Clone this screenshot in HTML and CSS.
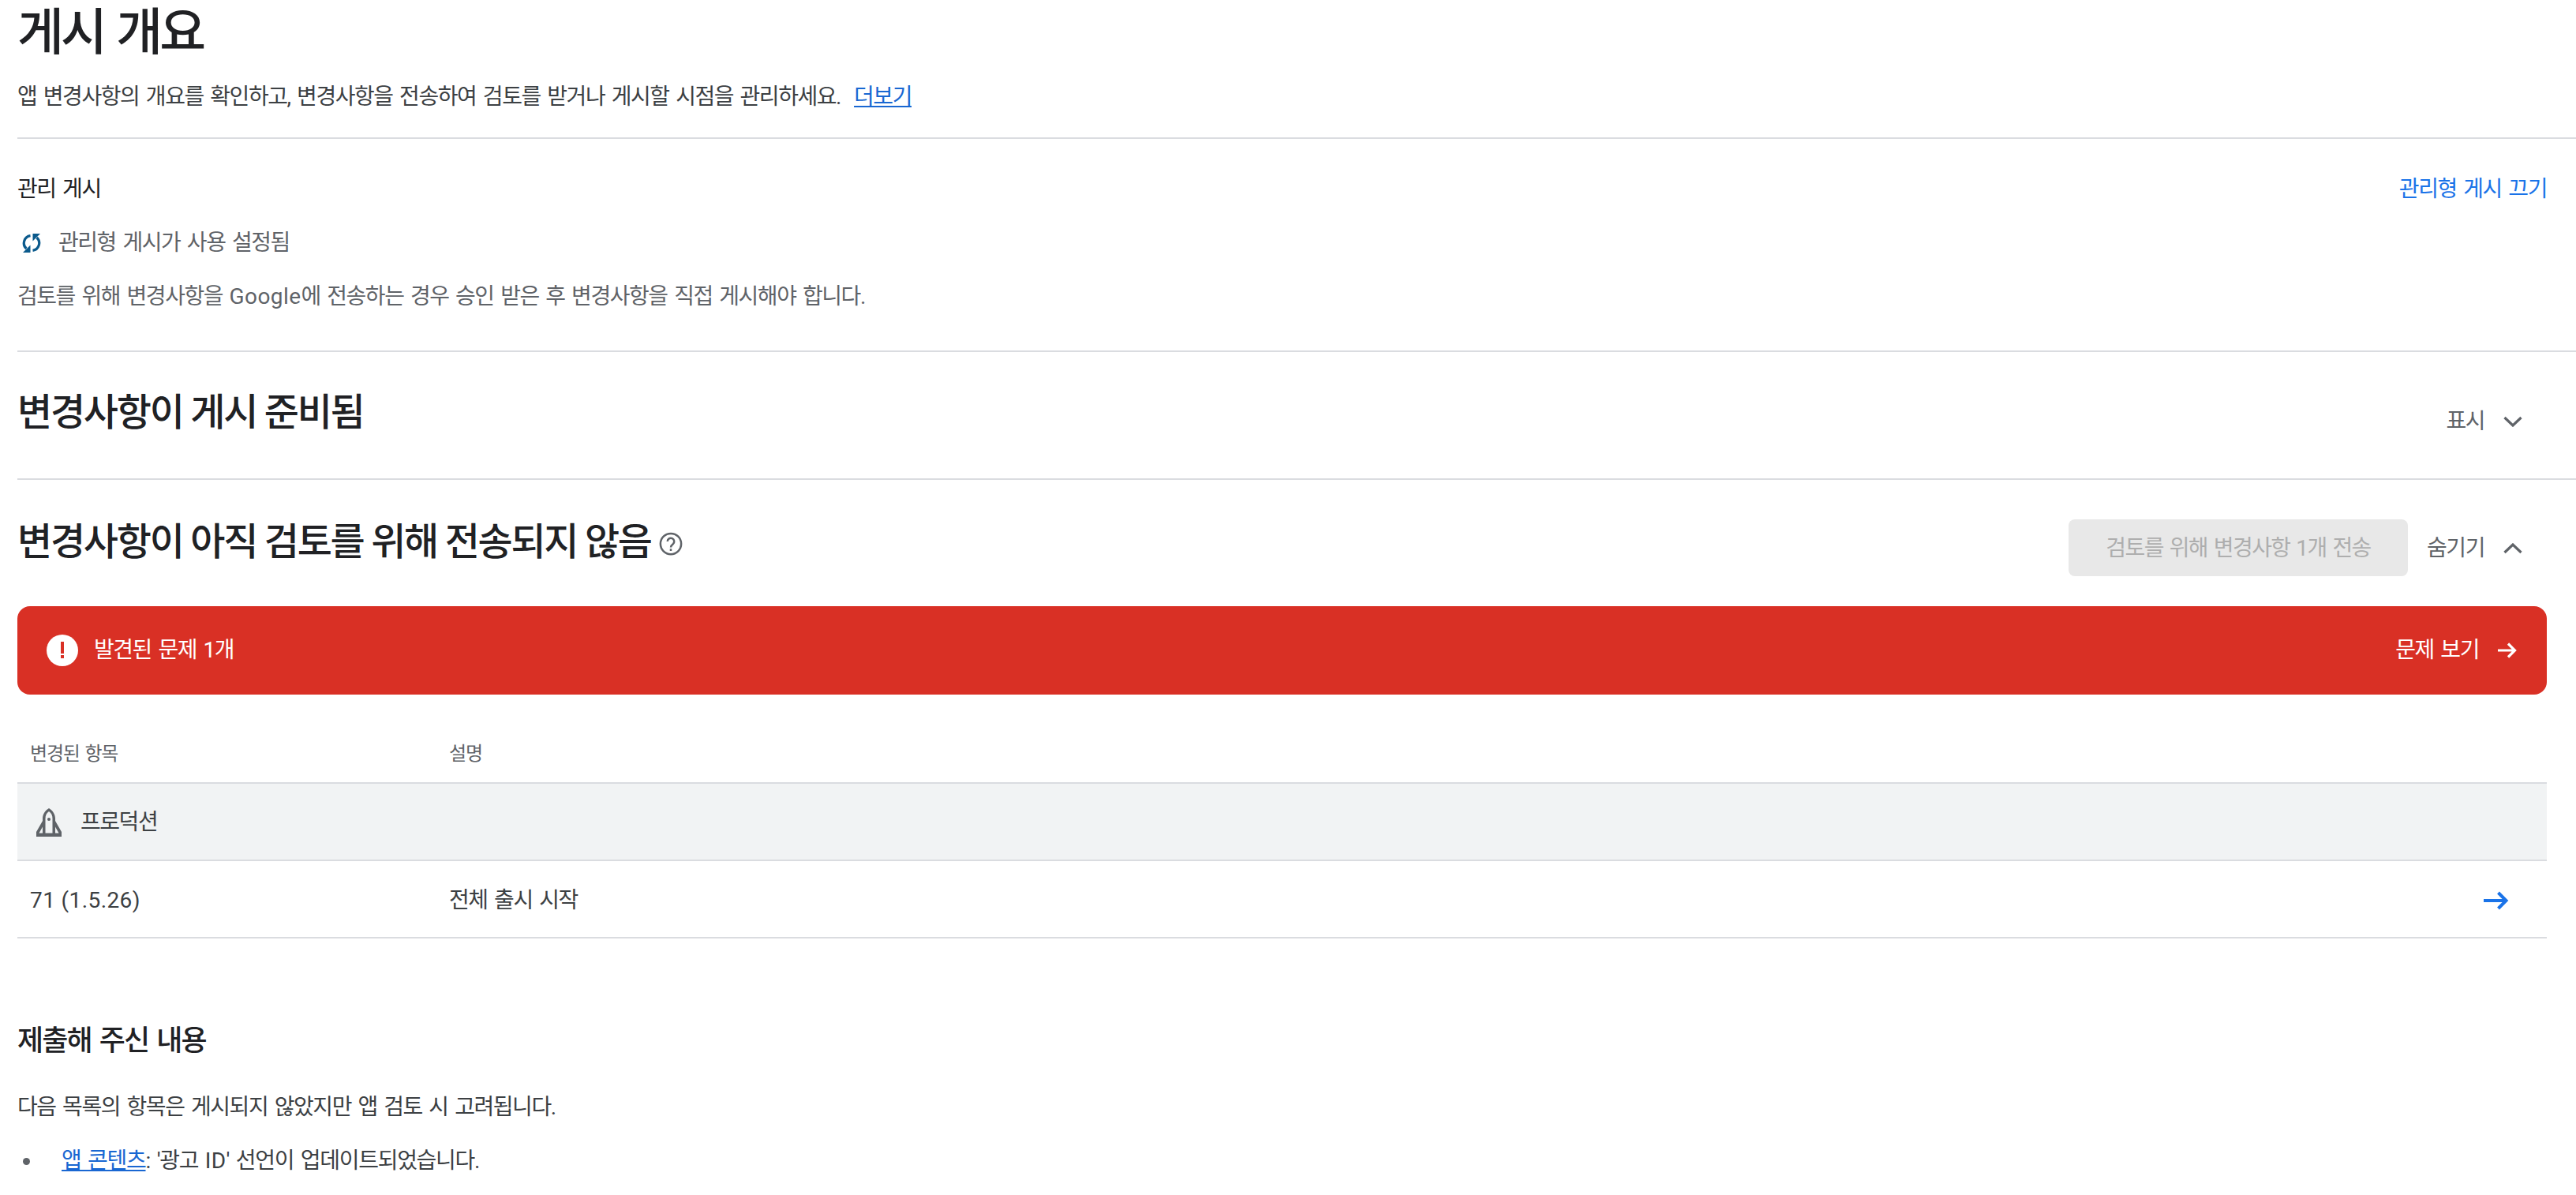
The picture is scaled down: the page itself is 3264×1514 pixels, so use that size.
FILE: index.html
```html
<!DOCTYPE html>
<html lang="ko">
<head>
<meta charset="utf-8">
<title>게시 개요</title>
<link rel="stylesheet" href="styles.css">
</head>
<body>
<main class="page">
  <section class="intro">
    <h1 class="title">게시 개요</h1>
    <p class="lead">앱 변경사항의 개요를 확인하고, 변경사항을 전송하여 검토를 받거나 게시할 시점을 관리하세요.<a class="link more" href="#">더보기</a></p>
  </section>

  <section class="managed">
    <div class="managed-head">
      <h2 class="label">관리 게시</h2>
      <a class="plain-link" href="#">관리형 게시 끄기</a>
    </div>
    <div class="status">
      <svg class="sync-icon" viewBox="0 0 24 24"><path d="M10.5 2.6A9.5 9.5 0 0 0 5.4 19" fill="none" stroke="#0b5a8c" stroke-width="3.2"/><path d="M1 24h9.5v-9.5z" fill="#0b5a8c"/><path d="M13.5 21.4A9.5 9.5 0 0 0 18.6 5" fill="none" stroke="#0b5a8c" stroke-width="3.2"/><path d="M23 0h-9.5v9.5z" fill="#0b5a8c"/></svg>
      <span>관리형 게시가 사용 설정됨</span>
    </div>
    <p class="managed-desc">검토를 위해 변경사항을 <span class="latin">Google</span>에 전송하는 경우 승인 받은 후 변경사항을 직접 게시해야 합니다.</p>
  </section>

  <section class="ready">
    <h2 class="heading">변경사항이 게시 준비됨</h2>
    <div class="toggle toggle-ready">
      <span>표시</span>
      <svg class="chevron" viewBox="0 0 24 14"><path d="M1.5 2 12 12 22.5 2" fill="none" stroke="#5f6368" stroke-width="3.2"/></svg>
    </div>
  </section>

  <section class="pending">
    <div class="pending-head">
      <div class="heading-wrap">
        <h2 class="heading">변경사항이 아직 검토를 위해 전송되지 않음</h2>
        <svg class="help-icon" viewBox="0 0 24 24"><circle cx="12" cy="12" r="10.5" fill="none" stroke="#5f6368" stroke-width="2"/><path d="M8.6 9.6a3.4 3.4 0 1 1 5.6 2.6c-1.3 1-2.2 1.7-2.2 3.4" fill="none" stroke="#5f6368" stroke-width="2"/><rect x="11" y="17" width="2" height="2.2" fill="#5f6368"/></svg>
      </div>
      <div class="actions">
        <button class="send" disabled>검토를 위해 변경사항 1개 전송</button>
        <div class="toggle toggle-pending">
          <span>숨기기</span>
          <svg class="chevron" viewBox="0 0 24 14"><path d="M1.5 12 12 2 22.5 12" fill="none" stroke="#5f6368" stroke-width="3.2"/></svg>
        </div>
      </div>
    </div>

    <div class="alert">
      <div class="alert-left">
        <svg class="alert-icon" viewBox="0 0 40 40"><circle cx="20" cy="20" r="20" fill="#fff"/><rect x="18" y="9" width="4" height="15" fill="#d93025"/><rect x="18" y="26" width="4" height="4" fill="#d93025"/></svg>
        <span>발견된 문제 1개</span>
      </div>
      <div class="alert-right">
        <span>문제 보기</span>
        <svg class="alert-arrow" viewBox="0 0 24 24"><path d="M0 12h21M13 3.5l8.5 8.5-8.5 8.5" fill="none" stroke="#fff" stroke-width="3.2"/></svg>
      </div>
    </div>

    <div class="changes">
      <div class="row row-head"><span>변경된 항목</span><span>설명</span></div>
      <div class="row-track">
        <svg class="rocket" viewBox="0 0 32 36"><path fill="#5f6368" fill-rule="evenodd" d="M16 0C21 3 24 8 24 13v3l8 14v6H0v-6l8-14v-3C8 8 11 3 16 0zM16 4C13 6 11.5 9 11.5 13V31.500h9V13C20.500 9 19 6 16 4zM8 23.500 3.500 31.500H8zM24 23.500V31.500h4.500z"/><circle cx="16" cy="14" r="2" fill="#5f6368"/></svg>
        <span>프로덕션</span>
      </div>
      <div class="row row-item">
        <span class="latin">71 (1.5.26)</span><span>전체 출시 시작</span>
        <svg class="row-arrow" viewBox="0 0 32 24"><path d="M0 12h28.500M18.500 2l10 10-10 10" fill="none" stroke="#1a73e8" stroke-width="4"/></svg>
      </div>
    </div>
  </section>

  <section class="submitted">
    <h3 class="sub-title">제출해 주신 내용</h3>
    <p class="sub-desc">다음 목록의 항목은 게시되지 않았지만 앱 검토 시 고려됩니다.</p>
    <ul class="sub-list">
      <li><span class="item-text"><a class="link" href="#">앱 콘텐츠</a>: '광고 <span class="latin">ID</span>' 선언이 업데이트되었습니다.</span></li>
    </ul>
  </section>
</main>
</body>
</html>
```

FILE: styles.css
```css
* { box-sizing: border-box; }
html, body { margin: 0; height: 1514px; overflow: hidden; background: #fff; }
body {
  font-family: Roboto, "Noto Sans CJK KR", sans-serif;
  font-size: 28px;
  line-height: 40px;
  letter-spacing: -1.45px;
  word-spacing: 3px;
  color: #3c4043;
}
h1, h2, h3, p, ul { margin: 0; padding: 0; }
.latin { letter-spacing: 0.4px; word-spacing: 0; }
.page { padding-left: 22px; }
.intro { height: 176px; border-bottom: 2px solid #dadce0; }
.title { font-size: 64px; line-height: 84px; letter-spacing: -3.8px; font-weight: 500; color: #202124; }
.lead { margin-top: 19px; }
.link { color: #1967d2; text-decoration: underline; }
.more { margin-left: 17px; }
.plain-link { color: #1a73e8; text-decoration: none; }
.managed {
  height: 270px;
  padding: 44px 37px 0 0;
  border-bottom: 2px solid #dadce0;
}
.managed-head { display: flex; justify-content: space-between; }
.label { font-size: 28px; line-height: 40px; font-weight: 400; color: #202124; }
.status { display: flex; align-items: center; gap: 22px; margin-top: 28px; padding-left: 6px; color: #5f6368; }
.sync-icon { width: 24px; height: 24px; flex: none; }
.managed-desc { margin-top: 28px; color: #5f6368; }
.ready {
  display: flex;
  justify-content: space-between;
  align-items: flex-start;
  height: 162px;
  padding: 53px 68px 0 0;
  border-bottom: 2px solid #dadce0;
}
.heading { font-size: 48px; line-height: 48px; letter-spacing: -2.25px; word-spacing: 0; font-weight: 500; color: #202124; }
.toggle { display: flex; align-items: center; gap: 24px; line-height: 40px; color: #5f6368; }
.toggle-ready { margin-top: 15px; }
.toggle-pending { padding-top: 2px; }
.chevron { width: 24px; height: 14px; flex: none; }
.pending { padding: 50px 37px 0 0; }
.pending-head { display: flex; justify-content: space-between; align-items: flex-start; height: 72px; padding-right: 31px; }
.heading-wrap { display: flex; align-items: center; gap: 10px; margin-top: 5px; }
.help-icon { width: 30px; height: 30px; flex: none; margin-top: 4px; }
.actions { display: flex; align-items: center; gap: 24px; }
.send {
  width: 430px;
  height: 72px;
  padding: 1px 0 0;
  border: 0;
  border-radius: 8px;
  background: #e8e8e8;
  color: #aeaeae;
  font: inherit;
  letter-spacing: -1.6px;
  word-spacing: 2.500px;
}
.alert {
  display: flex;
  justify-content: space-between;
  align-items: center;
  height: 112px;
  margin-top: 38px;
  padding: 0 38px 0 37px;
  border-radius: 16px;
  background: #d93025;
  color: #fff;
}
.alert-left, .alert-right { display: flex; align-items: center; }
.alert-left { gap: 20px; }
.alert-right { gap: 24px; }
.alert-icon { width: 40px; height: 40px; flex: none; }
.alert-arrow { width: 24px; height: 24px; flex: none; }
.row {
  display: grid;
  grid-template-columns: 531px 1fr auto;
  align-items: center;
  padding: 0 48px 0 16px;
}
.row-head {
  height: 113px;
  padding-top: 38px;
  font-size: 24px;
  letter-spacing: -1.2px;
  word-spacing: 2px;
  color: #5f6368;
  border-bottom: 2px solid #dadce0;
}
.row-track {
  display: flex;
  align-items: center;
  gap: 24px;
  height: 98px;
  padding: 2px 0 0 24px;
  background: #f1f3f4;
  border-bottom: 2px solid #dadce0;
  color: #3c4043;
}
.rocket { width: 32px; height: 36px; flex: none; }
.row-item { height: 98px; padding-top: 3px; border-bottom: 2px solid #dadce0; }
.row-arrow { width: 32px; height: 24px; }
.submitted { padding-top: 106px; }
.sub-title { font-size: 36px; line-height: 48px; letter-spacing: -1.9px; word-spacing: 3px; font-weight: 500; color: #202124; }
.sub-desc { margin-top: 40px; }
.sub-list { margin-top: 28px; list-style: none; }
.sub-list li { display: flex; align-items: center; }
.sub-list li::before {
  content: "";
  width: 9px;
  height: 9px;
  margin: 0 40px 0 7px;
  border-radius: 50%;
  background: #5f6368;
  flex: none;
}
.item-text { letter-spacing: -1.3px; }
```
